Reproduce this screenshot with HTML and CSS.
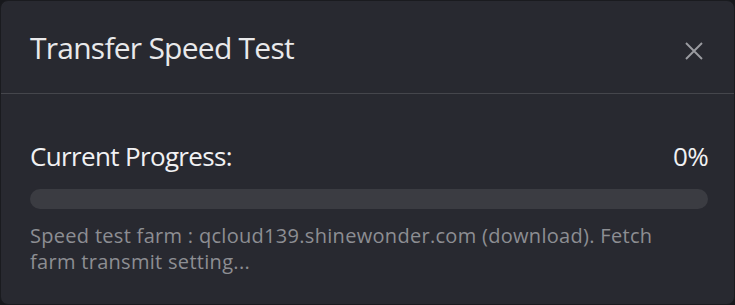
FILE: index.html
```html
<!DOCTYPE html>
<html>
<head>
<meta charset="utf-8">
<link rel="stylesheet" href="styles.css">
</head>
<body>
<div class="dialog">
  <div class="header">
    <div class="title">Transfer Speed Test</div>
    <button class="close" aria-label="Close">
      <svg width="18" height="18" viewBox="0 0 18 18"><path d="M1 1L17 17M17 1L1 17" stroke="#9b9ca1" stroke-width="1.9" fill="none"/></svg>
    </button>
  </div>
  <div class="body">
    <div class="progress-row">
      <span class="label">Current Progress:</span>
      <span class="pct">0%</span>
    </div>
    <div class="bar"><div class="fill" style="width:0%"></div></div>
    <div class="status">Speed test farm : qcloud139.shinewonder.com (download). Fetch farm transmit setting...</div>
  </div>
</div>
</body>
</html>
```
FILE: styles.css
```css
html, body { margin: 0; padding: 0; background: #17181c; }
body { font-family: "Open Sans", "Noto Sans", sans-serif; }
.dialog {
  box-sizing: border-box;
  width: 735px; height: 305px;
  background: #282930;
  border: 1px solid #1a1b1f;
  border-radius: 8px;
  display: flex; flex-direction: column;
}
.header {
  box-sizing: border-box;
  height: 93px;
  flex: none;
  border-bottom: 1px solid #45464c;
  display: flex; align-items: flex-start; justify-content: space-between;
  padding: 27px 31px 0 29px;
}
.title { color: #e9e9eb; font-size: 30px; line-height: 40px; letter-spacing: -0.75px; }
.close { background: none; border: 0; padding: 0; width: 18px; height: 18px; display: flex; margin-top: 14px; cursor: pointer; }
.body { padding: 45px 26px 0 29px; }
.progress-row { display: flex; justify-content: space-between; color: #f1f1f3; font-size: 26px; line-height: 34px; letter-spacing: -0.65px; }
.bar { margin-top: 16px; height: 20px; border-radius: 10px; background: #3b3c42; overflow: hidden; }
.fill { height: 100%; background: #4a8cff; }
.status { margin-top: 14px; color: #8d8e93; font-size: 20px; line-height: 26px; letter-spacing: 0.3px; max-width: 660px; }
```
